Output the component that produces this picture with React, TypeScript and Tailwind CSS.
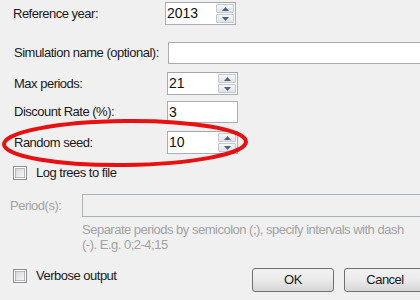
import { ReactNode } from "react";

function Spinner() {
  return (
    <div className="flex flex-col gap-px w-[18px] h-[19px] mr-px">
      <div className="flex-1 flex items-center justify-center border border-[#c4c8cf] bg-gradient-to-b from-[#f6f7f9] to-[#dfe3e8] rounded-[1px]">
        <svg width="7" height="4" viewBox="0 0 7 4">
          <path d="M0 4 L3.5 0 L7 4 Z" fill="#4d6185" />
        </svg>
      </div>
      <div className="flex-1 flex items-center justify-center border border-[#c4c8cf] bg-gradient-to-b from-[#f6f7f9] to-[#dfe3e8] rounded-[1px]">
        <svg width="7" height="4" viewBox="0 0 7 4">
          <path d="M0 0 L3.5 4 L7 0 Z" fill="#4d6185" />
        </svg>
      </div>
    </div>
  );
}

function NumBox({ value, spin = true }: { value: string; spin?: boolean }) {
  return (
    <div className="w-[71px] h-[23px] flex items-center border border-[#abadb3] border-t-[#a3a6ad] bg-white">
      <span className="flex-1 pl-[1px] text-[14px] tracking-normal text-[#111]">{value}</span>
      {spin && <Spinner />}
    </div>
  );
}

function Row({ label, children, className }: { label: string; children: ReactNode; className?: string }) {
  return (
    <div className={"flex items-center " + (className ?? "")}>
      <span className="w-[167px] pl-[14px] shrink-0 whitespace-nowrap">{label}</span>
      {children}
    </div>
  );
}

function CheckBox({ label }: { label: string }) {
  return (
    <div className="flex items-center gap-[9px] pl-[13px] h-[14px]">
      <div className="w-[14px] h-[14px] border border-[#8e8f8f] bg-white p-px">
        <div className="w-full h-full border border-[#b8b9ba] bg-gradient-to-br from-[#d8d9da] to-[#f7f7f7]" />
      </div>
      <span className="whitespace-nowrap">{label}</span>
    </div>
  );
}

function WinButton({ children, className }: { children: ReactNode; className?: string }) {
  return (
    <div
      className={
        "h-[24px] w-[82px] shrink-0 rounded-[3px] border border-[#707070] flex items-center justify-center bg-gradient-to-b from-[#f2f2f2] via-[#ebebeb] to-[#d5d5d5] " +
        (className ?? "")
      }
    >
      {children}
    </div>
  );
}

export default function App() {
  return (
    <div
      className="relative w-[420px] h-[300px] overflow-hidden bg-[#f0f0f0] text-[13px] text-[#1a1a1a] tracking-[-0.5px]"
      style={{ fontFamily: '"Liberation Sans", Arial, sans-serif' }}
    >
      <div className="flex flex-col pt-[2px]">
        <Row label="Reference year:" className="h-[23px] -ml-[1px]">
          <div className="-ml-[1px]">
            <NumBox value="2013" />
          </div>
        </Row>

        <Row label="Simulation name (optional):" className="mt-[17px] h-[22px]">
          <div className="ml-[1px] flex-1 h-[22px] border border-[#abadb3] border-r-0 bg-white" />
        </Row>

        <Row label="Max periods:" className="mt-[8px] h-[23px]">
          <NumBox value="21" />
        </Row>

        <Row label="Discount Rate (%):" className="mt-[6px] h-[22px]">
          <div className="w-[71px] h-[22px] flex items-center border border-[#abadb3] bg-white">
            <span className="pl-[1px] text-[14px] tracking-normal text-[#111]">3</span>
          </div>
        </Row>

        <Row label="Random seed:" className="mt-[8px] h-[23px]">
          <NumBox value="10" />
        </Row>

        <div className="mt-[12px]">
          <CheckBox label="Log trees to file" />
        </div>

        <div className="mt-[14px] h-[23px] flex items-center text-[#a3a3a3]">
          <span className="w-[82px] pl-[10px] shrink-0">Period(s):</span>
          <div className="flex-1 h-[23px] border border-[#adb2b5] border-r-0 bg-[#f0f0f0]" />
        </div>

        <div className="ml-[82px] mt-[5px] text-[#a3a3a3] leading-[15px] whitespace-nowrap">
          Separate periods by semicolon (;), specify intervals with dash
          <br />
          (-). E.g. 0;2-4;15
        </div>

        <div className="mt-[16px] h-[24px] flex items-start">
          <div className="flex-1 pt-[1px]">
            <CheckBox label="Verbose output" />
          </div>
          <WinButton className="mr-[10px]">OK</WinButton>
          <WinButton className="-mr-[6px]">Cancel</WinButton>
        </div>
      </div>

      <svg className="absolute left-0 top-[112px]" width="260" height="64" viewBox="0 0 260 64">
        <ellipse cx="125" cy="31" rx="121" ry="22" fill="none" stroke="#e81010" strokeWidth="4" transform="rotate(-0.6 125 31)" />
      </svg>
    </div>
  );
}
